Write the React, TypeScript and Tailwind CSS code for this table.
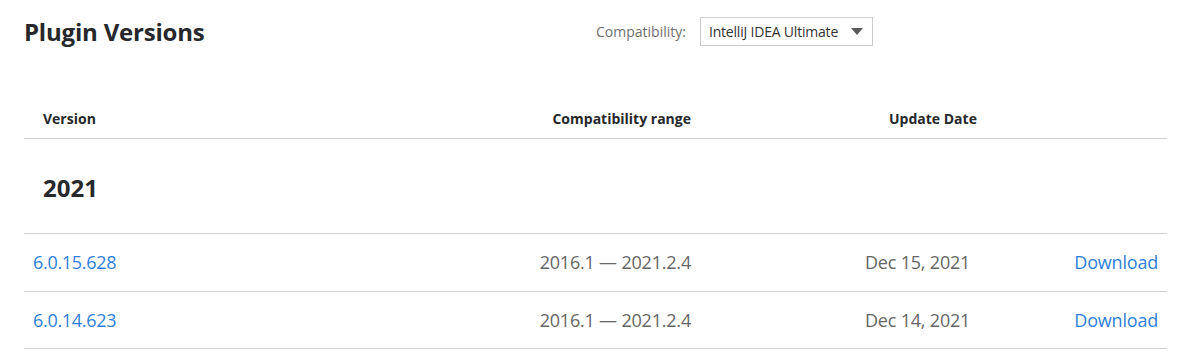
const versions = [
  { version: "6.0.15.628", range: "2016.1 — 2021.2.4", date: "Dec 15, 2021" },
  { version: "6.0.14.623", range: "2016.1 — 2021.2.4", date: "Dec 14, 2021" },
];

const cols = "grid grid-cols-[456px_211px_309px_1fr] items-center";

export default function App() {
  return (
    <div className="min-h-[364px] bg-white pl-[24px] pr-[20px] text-[#27282c] [font-family:'Open_Sans','Noto_Sans',sans-serif]">
      <div className="grid h-[63px] grid-cols-[572px_1fr] items-center">
        <h1 className="text-[24px] font-bold tracking-[-0.2px]">Plugin Versions</h1>
        <div className="flex items-center gap-[14px]">
          <span className="text-[14px] text-[#707070]">Compatibility:</span>
          <button className="flex h-[29px] w-[173px] items-center justify-between border border-[#cccccc] bg-white pl-[8px] pr-[9px] text-[14px] text-[#333]">
            <span className="tracking-[-0.2px]">IntelliJ IDEA Ultimate</span>
            <svg width="12" height="7" viewBox="0 0 12 7" className="fill-[#5a5a5a]">
              <path d="M0 0h12L6 7z" />
            </svg>
          </button>
        </div>
      </div>

      <div className="mt-[35px]">
        <div className={`${cols} h-[41px] border-b border-[#d1d1d1] text-[14px] font-bold`}>
          <span className="pl-[19px]">Version</span>
          <span className="text-right">Compatibility range</span>
          <span className="pl-[198px]">Update Date</span>
          <span />
        </div>

        <div className="flex h-[95px] items-center border-b border-[#d1d1d1] pl-[19px] pt-[4px]">
          <h2 className="text-[24px] font-bold">2021</h2>
        </div>

        {versions.map((v, i) => (
          <div
            key={v.version}
            className={`${cols} ${i === 0 ? "h-[58px]" : "h-[57px]"} border-b border-[#d1d1d1] text-[18px]`}
          >
            <a href="#" className="pl-[9px] tracking-[-0.3px] text-[#2f7fd8]">
              {v.version}
            </a>
            <span className="text-right tracking-[-0.2px] text-[#666]">{v.range}</span>
            <span className="pl-[174px] tracking-[-0.2px] text-[#666]">{v.date}</span>
            <a href="#" className="pr-[9px] text-right tracking-[-0.2px] text-[#2f7fd8]">
              Download
            </a>
          </div>
        ))}
      </div>
    </div>
  );
}
